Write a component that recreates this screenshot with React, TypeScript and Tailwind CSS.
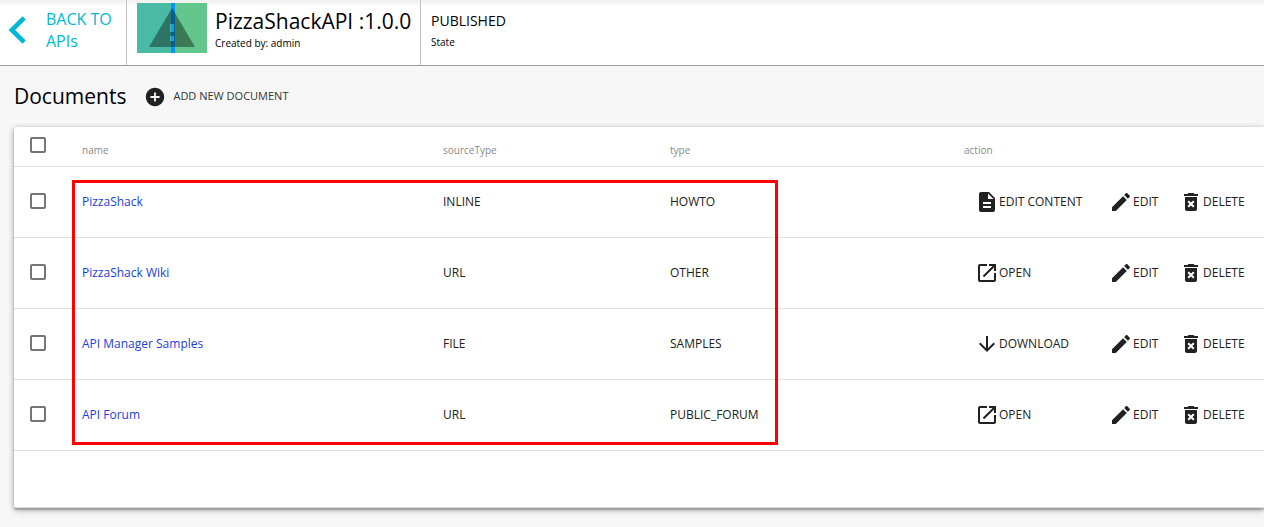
import type { ReactNode } from 'react';

const ICONS = {
  add: 'M12 2C6.48 2 2 6.48 2 12s4.48 10 10 10 10-4.48 10-10S17.52 2 12 2zm5 11h-4v4h-2v-4H7v-2h4V7h2v4h4v2z',
  description:
    'M14 2H6c-1.1 0-1.99.9-1.99 2L4 20c0 1.1.89 2 1.99 2H18c1.1 0 2-.9 2-2V8l-6-6zm2 16H8v-2h8v2zm0-4H8v-2h8v2zm-3-5V3.5L18.5 9H13z',
  open: 'M19 19H5V5h7V3H5c-1.11 0-2 .9-2 2v14c0 1.1.89 2 2 2h14c1.1 0 2-.9 2-2v-7h-2v7zM14 3v2h3.59l-9.83 9.83 1.41 1.41L19 6.41V10h2V3h-7z',
  download: 'M20 12l-1.41-1.41L13 16.17V4h-2v12.17l-5.58-5.59L4 12l8 8 8-8z',
  edit: 'M3 17.25V21h3.75L17.81 9.94l-3.75-3.75L3 17.25zM20.71 7.04c.39-.39.39-1.02 0-1.41l-2.34-2.34c-.39-.39-1.02-.39-1.41 0l-1.83 1.83 3.75 3.75 1.83-1.83z',
  remove:
    'M6 19c0 1.1.9 2 2 2h8c1.1 0 2-.9 2-2V7H6v12zm2.46-7.12l1.41-1.41L12 12.59l2.12-2.12 1.41 1.41L13.41 14l2.12 2.12-1.41 1.41L12 15.41l-2.12 2.12-1.41-1.41L10.59 14l-2.13-2.12zM15.5 4l-1-1h-5l-1 1H5v2h14V4z',
};

type IconName = keyof typeof ICONS;

function Icon({ name, className = 'size-6' }: { name: IconName; className?: string }) {
  return (
    <svg viewBox="0 0 24 24" className={`shrink-0 fill-[#212121] ${className}`} aria-hidden="true">
      <path d={ICONS[name]} />
    </svg>
  );
}

function Action({ icon, children }: { icon: IconName; children: ReactNode }) {
  return (
    <button type="button" className="flex items-center text-xs whitespace-nowrap text-[#212121]">
      <Icon name={icon} />
      {children}
    </button>
  );
}

function Tick({ label }: { label: string }) {
  return (
    <input
      type="checkbox"
      aria-label={label}
      className="block size-4 appearance-none rounded-xs border-2 border-[#757575] bg-white checked:bg-[#757575]"
    />
  );
}

const DOCUMENTS: { name: string; source: string; type: string; icon: IconName; action: string }[] = [
  { name: 'PizzaShack', source: 'INLINE', type: 'HOWTO', icon: 'description', action: 'EDIT CONTENT' },
  { name: 'PizzaShack Wiki', source: 'URL', type: 'OTHER', icon: 'open', action: 'OPEN' },
  { name: 'API Manager Samples', source: 'FILE', type: 'SAMPLES', icon: 'download', action: 'DOWNLOAD' },
  { name: 'API Forum', source: 'URL', type: 'PUBLIC_FORUM', icon: 'open', action: 'OPEN' },
];

function ApiHeader() {
  return (
    <header className="flex h-[66px] border-b border-[#9e9e9e] bg-white bg-linear-to-b from-[#efefef] to-white to-10% text-black">
      <a href="#apis" className="flex w-[127px] items-start border-r border-[#c4c4c4] pt-2 pl-2 text-[#00b8d4]">
        <svg viewBox="0 0 18 28" className="mt-2 h-7 w-[18px] shrink-0" aria-hidden="true">
          <path d="M16.2 1.8 3.8 14l12.4 12.2" fill="none" stroke="currentColor" strokeWidth="4.6" />
        </svg>
        <span className="ml-5 text-base leading-[22px]">BACK TO APIs</span>
      </a>
      <div className="flex w-[294px] items-start border-r border-[#c4c4c4] pt-[3px] pl-2.5">
        <svg viewBox="0 0 70 50" className="h-[50px] w-[70px] shrink-0" aria-hidden="true">
          <path d="M0 0h35v50H0z" fill="#49bba5" />
          <path d="M37 0h33v50H37z" fill="#62c68d" />
          <path d="M34 0h4v50h-4z" fill="#0399f0" />
          <path d="M35 5 58 44H12z" fill="#000" fillOpacity=".38" />
          <path d="M33 21h4v8h-4zM33 33h4v5h-4z" fill="#0d9df0" />
          <path d="M33 21h1v8h-1zM33 33h1v5h-1z" fill="#49bba5" />
        </svg>
        <div className="ml-2 pt-1">
          <h1 className="text-[21px] leading-7 whitespace-nowrap">PizzaShackAPI :1.0.0</h1>
          <p className="text-[10px] leading-4">Created by: admin</p>
        </div>
      </div>
      <div className="pt-2.5 pl-2.5">
        <p className="text-sm leading-[22px]">PUBLISHED</p>
        <p className="text-[10px] leading-5">State</p>
      </div>
    </header>
  );
}

export default function App() {
  return (
    <div className="min-h-screen overflow-hidden bg-[#f7f7f7] font-['Open_Sans','Noto_Sans',sans-serif]">
      <ApiHeader />
      <main className="pl-3.5">
        <div className="flex h-[61px] items-center gap-[18px]">
          <h2 className="text-[21px] text-black">Documents</h2>
          <button type="button" className="flex items-center gap-[7px] text-[11px] text-[#333333]">
            <Icon name="add" className="size-[22px]" />
            ADD NEW DOCUMENT
          </button>
        </div>
        <section className="relative rounded-l-xs border-b border-[#e0e0e0] bg-white pb-14 shadow-[0_1px_5px_rgba(0,0,0,0.25),0_2px_2px_rgba(0,0,0,0.2),0_3px_8px_rgba(0,0,0,0.15)]">
          <table className="w-full table-fixed border-collapse text-left text-xs text-[#212121]">
            <colgroup>
              <col className="w-[68px]" />
              <col className="w-[361px]" />
              <col className="w-[227px]" />
              <col className="w-[294px]" />
              <col />
            </colgroup>
            <thead>
              <tr className="h-[39px] border-b border-[#e0e0e0] text-[10px] text-[#8a8a8a]">
                <th className="pb-0.5 pl-4 align-middle">
                  <Tick label="Select all documents" />
                </th>
                <th className="pt-2 font-normal">name</th>
                <th className="pt-2 font-normal">sourceType</th>
                <th className="pt-2 font-normal">type</th>
                <th className="pt-2 font-normal">action</th>
              </tr>
            </thead>
            <tbody>
              {DOCUMENTS.map((doc) => (
                <tr key={doc.name} className="h-[71px] border-b border-[#e0e0e0]">
                  <td className="pb-0.5 pl-4">
                    <Tick label={`Select ${doc.name}`} />
                  </td>
                  <td>
                    <a href="#document" className="text-[#1a3ee0]">
                      {doc.name}
                    </a>
                  </td>
                  <td>{doc.source}</td>
                  <td>{doc.type}</td>
                  <td className="pl-[11px]">
                    <div className="grid grid-cols-[134px_70px_auto]">
                      <Action icon={doc.icon}>{doc.action}</Action>
                      <Action icon="edit">EDIT</Action>
                      <Action icon="remove">DELETE</Action>
                    </div>
                  </td>
                </tr>
              ))}
            </tbody>
          </table>
          <div className="pointer-events-none absolute top-[53px] left-[58px] h-[265px] w-[706px] border-3 border-[#ff0000]" />
        </section>
      </main>
    </div>
  );
}
